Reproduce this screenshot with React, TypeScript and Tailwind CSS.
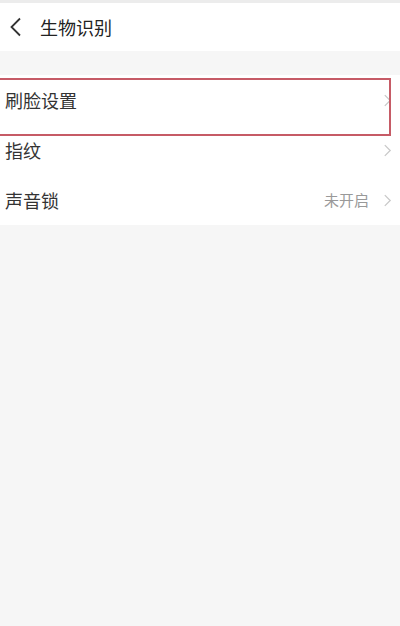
import React from "react";

const rows = [
	{ label: "刷脸设置", value: "" },
	{ label: "指纹", value: "" },
	{ label: "声音锁", value: "未开启" },
];

function Chevron({ className }: { className?: string }) {
	return (
		<svg viewBox="0 0 10 16" className={className} fill="none" stroke="currentColor" strokeWidth="1.4">
			<path d="M2 2l6 6-6 6" />
		</svg>
	);
}

export default function App() {
	return (
		<div
			className="w-[400px] h-[626px] bg-[#f6f6f6] flex flex-col"
			style={{ fontFamily: '"Noto Sans CJK SC", "Noto Sans", sans-serif' }}
		>
			<div className="h-[3px] bg-[#ececec]" />
			{/* header */}
			<header className="h-[48px] bg-white flex items-center">
				<svg viewBox="0 0 14 20" className="w-[14px] h-[20px] ml-[9px] text-[#333]" fill="none" stroke="currentColor" strokeWidth="1.8">
					<path d="M11 1.5L2.5 10l8.5 8.5" />
				</svg>
				<span className="ml-[17px] text-[18px] text-[#222]">生物识别</span>
			</header>
			<div className="h-[24px]" />

			{/* list */}
			<div className="relative bg-white">
				{rows.map((r) => (
					<div key={r.label} className="h-[50px] flex items-center pl-[5px] pr-[8px]">
						<span className="text-[18px] text-[#333] flex-1">{r.label}</span>
						{r.value && <span className="text-[15px] text-[#999] mr-[14px]">{r.value}</span>}
						<Chevron className="w-[9px] h-[15px] text-[#c8c8c8]" />
					</div>
				))}
				<div className="absolute left-[-2px] top-[3px] w-[393px] h-[58px] border-2 border-[#c65b66]" />
			</div>
		</div>
	);
}
